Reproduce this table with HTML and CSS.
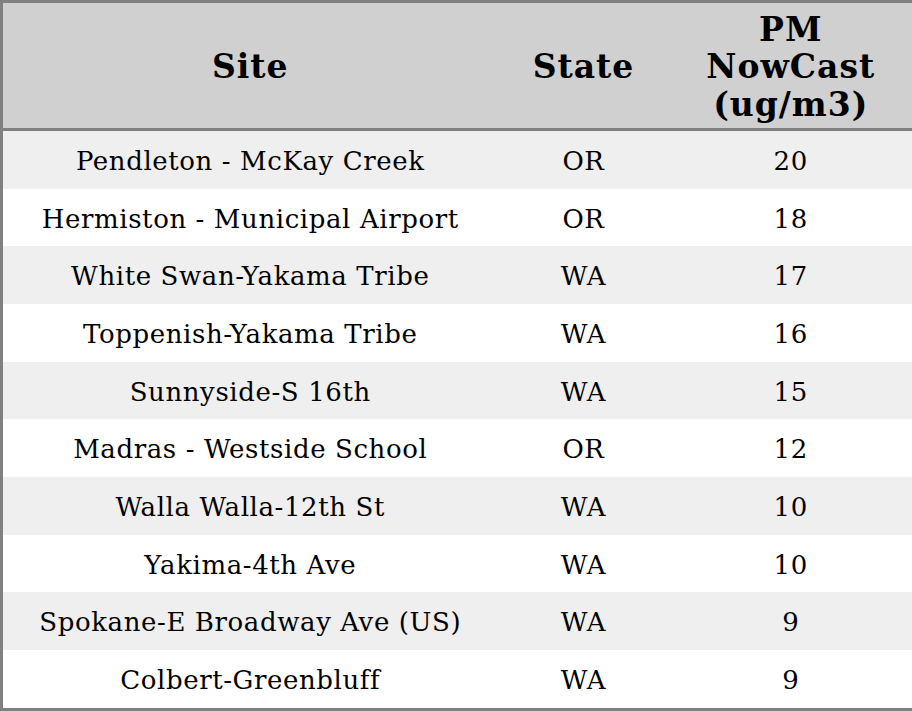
FILE: index.html
```html
<!DOCTYPE html>
<html>
<head>
<meta charset="utf-8">
<link rel="stylesheet" href="styles.css">
</head>
<body>
<table class="aq">
  <colgroup>
    <col class="c-site">
    <col class="c-state">
    <col class="c-pm">
  </colgroup>
  <thead>
    <tr class="head"><th>Site</th><th>State</th><th>PM NowCast (ug/m3)</th></tr>
  </thead>
  <tbody>
    <tr><td>Pendleton - McKay Creek</td><td>OR</td><td>20</td></tr>
    <tr><td>Hermiston - Municipal Airport</td><td>OR</td><td>18</td></tr>
    <tr><td>White Swan-Yakama Tribe</td><td>WA</td><td>17</td></tr>
    <tr><td>Toppenish-Yakama Tribe</td><td>WA</td><td>16</td></tr>
    <tr><td>Sunnyside-S 16th</td><td>WA</td><td>15</td></tr>
    <tr><td>Madras - Westside School</td><td>OR</td><td>12</td></tr>
    <tr><td>Walla Walla-12th St</td><td>WA</td><td>10</td></tr>
    <tr><td>Yakima-4th Ave</td><td>WA</td><td>10</td></tr>
    <tr><td>Spokane-E Broadway Ave (US)</td><td>WA</td><td>9</td></tr>
    <tr><td>Colbert-Greenbluff</td><td>WA</td><td>9</td></tr>
  </tbody>
</table>
</body>
</html>
```
FILE: styles.css
```css
html, body {
  margin: 0;
  padding: 0;
  background: #ffffff;
}
.aq {
  width: 912px;
  height: 711px;
  border-collapse: collapse;
  border: 3px solid #808080;
  font-family: "DejaVu Serif", serif;
  color: #000;
  table-layout: fixed;
}
.c-site { width: 496px; }
.c-state { width: 172px; }
.c-pm { width: 244px; }
.aq th {
  background: #d0d0d0;
  font-size: 33px;
  letter-spacing: 1px;
  font-weight: bold;
  line-height: 37.5px;
  height: 122px;
  padding: 3px 20px 0;
  border-bottom: 3px solid #808080;
  text-align: center;
  vertical-align: middle;
}
.aq td {
  font-size: 26px;
  letter-spacing: 0.6px;
  text-align: center;
  vertical-align: middle;
  padding: 2px 0 0;
  height: 50px;
}
.aq tbody tr:nth-child(odd) { background: #efefef; }
.aq tbody tr:nth-child(even) { background: #ffffff; }
```
